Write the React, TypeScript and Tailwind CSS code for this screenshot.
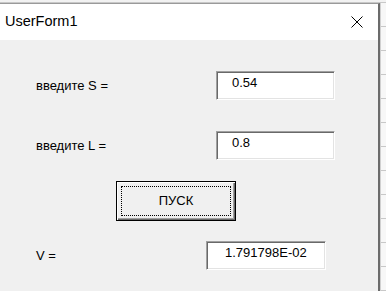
function TextBox({ value, width, pad }: { value: string; width: string; pad: string }) {
  return (
    <div
      className={`${width} h-[29px] bg-white border border-t-[#a0a0a0] border-l-[#a0a0a0] border-r-white border-b-white shadow-[inset_1px_1px_0_#696969,inset_-1px_-1px_0_#e3e3e3] ${pad} pt-[3px] text-[13px] leading-[16px] text-black`}
    >
      {value}
    </div>
  );
}

export default function App() {
  return (
    <div className="w-[386px] h-[291px] overflow-hidden bg-white flex flex-col font-['Liberation_Sans',Arial,sans-serif]">
      {/* spreadsheet strip above the form */}
      <div className="h-[3px] shrink-0 bg-[#f2f2f2] border-b border-[#c8c8c8]" />

      <div className="flex flex-1 min-h-0">
        {/* the form */}
        <div className="w-[380px] shrink-0 flex flex-col border-r-2 border-[#6b6b6b] border-t border-t-[#9a9a9a]">
          <div className="h-[36px] shrink-0 bg-white flex items-center justify-between pl-[5px] pr-[15px]">
            <span className="text-[14.5px] text-black">UserForm1</span>
            <svg width="12" height="12" viewBox="0 0 12 12" className="text-black">
              <path d="M0.5 0.5 L11.5 11.5 M11.5 0.5 L0.5 11.5" stroke="currentColor" strokeWidth="1" fill="none" />
            </svg>
          </div>

          <div className="flex-1 bg-[#f0f0f0] text-[13px] text-black">
            <div className="flex items-center pl-[36px] mt-[31px]">
              <span className="w-[180px]">введите S =</span>
              <TextBox value="0.54" width="w-[119px]" pad="pl-[15px]" />
            </div>

            <div className="flex items-center pl-[36px] mt-[31px]">
              <span className="w-[180px]">введите L =</span>
              <TextBox value="0.8" width="w-[119px]" pad="pl-[15px]" />
            </div>

            <div className="pl-[116px] mt-[21px]">
              <div className="w-[120px] h-[40px] border border-black bg-[#f0f0f0] shadow-[inset_1px_1px_0_#ffffff,inset_-1px_-1px_0_#696969,inset_-2px_-2px_0_#a0a0a0] p-[4px]">
                <div className="h-full border border-dotted border-black flex items-center justify-center">
                  ПУСК
                </div>
              </div>
            </div>

            <div className="flex items-center pl-[36px] mt-[20px]">
              <span className="w-[170px]">V =</span>
              <TextBox value="1.791798E-02" width="w-[120px]" pad="pl-[18px]" />
            </div>
          </div>
        </div>

        {/* spreadsheet cells to the right */}
        <div className="flex-1 bg-[#f7f7f7] border-l border-[#d0d0d0] bg-[repeating-linear-gradient(to_bottom,transparent_0px,transparent_23px,#c8c8c8_23px,#c8c8c8_24px)]" />
      </div>
    </div>
  );
}
